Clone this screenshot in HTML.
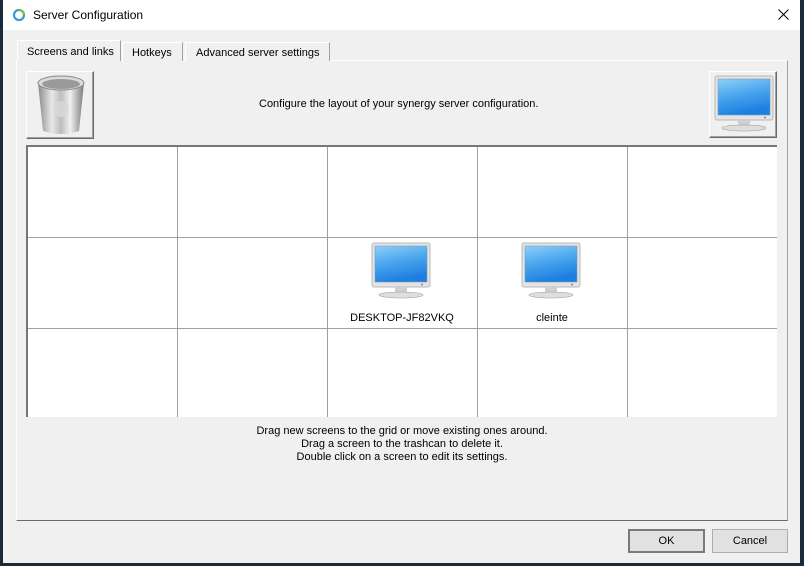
<!DOCTYPE html>
<html><head><style>
*{margin:0;padding:0;box-sizing:border-box}
body{width:804px;height:566px;background:#f0f0f0;font-family:"Liberation Sans",sans-serif;font-size:11px;color:#000;position:relative;overflow:hidden}
.abs{position:absolute}
.title{left:0;top:0;width:804px;height:30px;background:#fff}
.lb{left:0;top:0;width:3px;height:566px;background:#1a2a3a}
.rb{right:0;top:0;width:4px;height:566px;background:#1a2a3a}
.bb{left:0;bottom:0;width:804px;height:3px;background:#1a2a3a}
.tab{top:42px;height:19px;border:1px solid #adadad;border-bottom:none;background:#f0f0f0;padding:3px 6px 0;font-size:11px;white-space:nowrap}
.pane{left:16px;top:60px;width:772px;height:461px;border-left:1px solid #fff;border-top:1px solid #fff;border-right:1px solid #a0a0a0;border-bottom:1px solid #696969}
.btn3d{background:#f0f0f0;border:1px solid;border-color:#fff #696969 #696969 #fff;box-shadow:inset -1px -1px 0 #a0a0a0}
.grid{left:26px;top:145px;width:751px;height:272px;background:#fff;border-left:2px solid #777;border-top:2px solid #777}
.vl{position:absolute;top:0;width:1px;height:270px;background:#a0a0a0}
.hl{position:absolute;left:0;height:1px;width:749px;background:#a0a0a0}
.btn{top:529px;height:24px;border:1px solid #adadad;background:#e1e1e1;text-align:center;line-height:22px;font-size:11px}
.lbl{position:absolute;font-size:11px;text-align:center}
</style></head><body>
<div class="abs title"></div>
<svg class="abs" style="left:12px;top:8px" width="14" height="14" viewBox="0 0 14 14"><circle cx="7" cy="7" r="5" fill="none" stroke="#3a9bd5" stroke-width="2.2"/><path d="M7 2a5 5 0 0 1 5 5" fill="none" stroke="#7cc242" stroke-width="2.2"/></svg>
<div class="abs" style="left:33px;top:8px;font-size:12px">Server Configuration</div>
<svg class="abs" style="left:778px;top:9px" width="11" height="11"><path d="M0.5 0.5L10.5 10.5M10.5 0.5L0.5 10.5" stroke="#000" stroke-width="1"/></svg>
<div class="abs lb"></div><div class="abs rb"></div><div class="abs bb"></div>

<div class="abs pane"></div>
<div class="abs tab" style="left:17px;top:40px;height:21px;width:104px;border-color:#fff #a0a0a0 #f0f0f0 #fff;padding-top:5px;padding-left:9px">Screens and links</div>
<div class="abs tab" style="left:122px;width:61px;border-color:#fff #a0a0a0 #fff #fff;padding-left:9px;padding-top:4px">Hotkeys</div>
<div class="abs tab" style="left:185px;width:145px;border-color:#fff #a0a0a0 #fff #fff;padding-left:10px;padding-top:4px">Advanced server settings</div>

<div class="abs btn3d" style="left:26px;top:71px;width:68px;height:68px"></div>
<svg class="abs" style="left:34px;top:73px" width="54" height="64" viewBox="0 0 54 64">
<defs><linearGradient id="tg" x1="0" x2="1"><stop offset="0" stop-color="#8a8a8a"/><stop offset=".3" stop-color="#e8e8e8"/><stop offset=".5" stop-color="#bdbdbd"/><stop offset=".7" stop-color="#f0f0f0"/><stop offset="1" stop-color="#7a7a7a"/></linearGradient></defs>
<path d="M4 10 L9 58 Q27 64 45 58 L50 10Z" fill="url(#tg)"/>
<ellipse cx="27" cy="10" rx="23" ry="7" fill="#dcdcdc" stroke="#888"/>
<ellipse cx="27" cy="11" rx="19" ry="5" fill="#9a9a9a"/>
<circle cx="27" cy="36" r="8" fill="#d8d8d8" opacity=".8"/>
</svg>
<div class="abs" style="left:259px;top:98px">Configure the layout of your synergy server configuration.</div>
<div class="abs btn3d" style="left:709px;top:71px;width:68px;height:67px"></div>

<svg width="0" height="0" style="position:absolute"><defs>
<linearGradient id="sc" x1="0" y1="0" x2="0.3" y2="1"><stop offset="0" stop-color="#8fd0f8"/><stop offset=".5" stop-color="#4aa6ee"/><stop offset="1" stop-color="#1f7fe0"/></linearGradient>
<symbol id="mon" viewBox="0 0 60 58"><rect x="1" y="1" width="58" height="44" rx="2" fill="#e4e4e4" stroke="#b8b8b8"/><rect x="4" y="4" width="52" height="36" fill="url(#sc)" stroke="#7a9ab8" stroke-width=".6"/><circle cx="51" cy="42.5" r="1" fill="#888"/><rect x="24" y="45" width="12" height="6" fill="#d0d0d0"/><ellipse cx="30" cy="53" rx="22" ry="3" fill="#dedede" stroke="#999" stroke-width=".6"/></symbol>
</defs></svg>
<svg class="abs" style="left:714px;top:75px" width="60" height="58"><use href="#mon"/></svg>

<div class="abs grid">
<div class="vl" style="left:149px"></div><div class="vl" style="left:299px"></div><div class="vl" style="left:449px"></div><div class="vl" style="left:599px"></div>
<div class="hl" style="top:90px"></div><div class="hl" style="top:181px"></div>
<svg style="position:absolute;left:343px;top:95px" width="60" height="58"><use href="#mon"/></svg>
<svg style="position:absolute;left:493px;top:95px" width="60" height="58"><use href="#mon"/></svg>
<div class="lbl" style="left:299px;width:150px;top:165px">DESKTOP-JF82VKQ</div>
<div class="lbl" style="left:449px;width:150px;top:165px">cleinte</div>
</div>

<div class="abs" style="left:16px;width:772px;top:425px;text-align:center;line-height:13px">Drag new screens to the grid or move existing ones around.<br>Drag a screen to the trashcan to delete it.<br>Double click on a screen to edit its settings.</div>

<div class="abs btn" style="left:628px;width:77px;border:2px solid #7a7a7a;line-height:20px">OK</div>
<div class="abs btn" style="left:712px;width:76px">Cancel</div>
</body></html>
